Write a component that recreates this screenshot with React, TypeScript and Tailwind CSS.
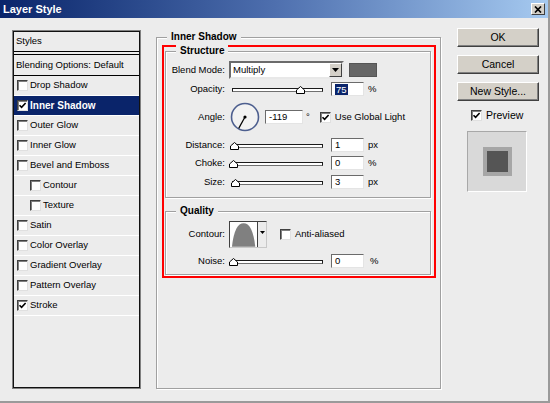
import React from 'react';

const styles = [
  { label: 'Drop Shadow' },
  { label: 'Inner Shadow', on: true, active: true },
  { label: 'Outer Glow' },
  { label: 'Inner Glow' },
  { label: 'Bevel and Emboss' },
  { label: 'Contour', sub: true },
  { label: 'Texture', sub: true },
  { label: 'Satin' },
  { label: 'Color Overlay' },
  { label: 'Gradient Overlay' },
  { label: 'Pattern Overlay' },
  { label: 'Stroke', on: true },
];

function Check({ on }: { on?: boolean }) {
  return (
    <span className="flex h-[11px] w-[11px] shrink-0 items-center justify-center border border-t-[#404040] border-l-[#404040] border-r-[#e0e0e0] border-b-[#e0e0e0] bg-white shadow-[inset_1px_1px_0_#808080]">
      {on && (
        <svg width="9" height="9" viewBox="0 0 9 9">
          <path d="M1.5 4.2L3.6 6.4L7.6 2" fill="none" stroke="#000" strokeWidth="1.6" />
        </svg>
      )}
    </span>
  );
}

function Slider({ at }: { at: number }) {
  return (
    <div className="relative h-[16px] w-[95px] shrink-0">
      <div className="ml-[3px] mt-[7px] h-[4px] w-[91px] border border-[#1a1a1a] border-b-[#707070] bg-white" />
      <svg className="absolute top-[5px]" style={{ left: at }} width="9" height="8" viewBox="0 0 9 8">
        <path d="M0.5 7.5V4L4.5 0.5L8.5 4V7.5Z" fill="#fff" stroke="#000" />
      </svg>
    </div>
  );
}

function Field({ children, w = 'w-[33px]' }: { children: React.ReactNode; w?: string }) {
  return (
    <span className={`flex h-[14px] ${w} shrink-0 items-center border border-t-[#6b6b6b] border-l-[#6b6b6b] border-r-[#e4e4e4] border-b-[#e4e4e4] bg-white pl-[3px] leading-none`}>
      {children}
    </span>
  );
}

function Row({ label, className = '', children }: { label: string; className?: string; children: React.ReactNode }) {
  return (
    <div className={`flex items-center ${className}`}>
      <span className="w-[59px] shrink-0 text-right">{label}</span>
      <div className="ml-[4px] flex items-center">{children}</div>
    </div>
  );
}

function Group({ title, className = '', children }: { title: string; className?: string; children?: React.ReactNode }) {
  return (
    <div className={`relative border border-[#a0a0a0] shadow-[inset_1px_1px_0_#fff,1px_1px_0_#fff] ${className}`}>
      <span className="absolute left-[10px] top-[-7px] bg-[#ececec] px-[4px] text-[10px] font-bold leading-[12px]">
        {title}
      </span>
      {children}
    </div>
  );
}

function Button({ children, className = '' }: { children: React.ReactNode; className?: string }) {
  return (
    <div className={`flex h-[19px] w-[82px] items-center justify-center border border-t-white border-l-white border-r-[#404040] border-b-[#404040] bg-[#d4d0c8] text-[10.5px] shadow-[inset_-1px_-1px_0_#808080] ${className}`}>
      {children}
    </div>
  );
}

export default function App() {
  return (
    <div className="h-[403px] w-[550px] overflow-hidden border-b-2 border-r-2 border-[#9a9a9a] bg-[#ececec] text-[9.5px] text-black [font-family:'Liberation_Sans',Arial,sans-serif]">
      {/* title bar */}
      <div className="flex h-[18px] items-center justify-between bg-linear-to-r from-[#0a246a] via-[#4e6fae] to-[#a6caf0] pl-[3px]">
        <span className="text-[11px] font-bold text-white">Layer Style</span>
        <span className="mr-[3px] flex h-[12px] w-[14px] items-center justify-center border border-t-white border-l-white border-r-[#404040] border-b-[#404040] bg-[#d4d0c8]">
          <svg width="8" height="7" viewBox="0 0 8 7">
            <path d="M1 0.5L7 6.5M7 0.5L1 6.5" stroke="#000" strokeWidth="1.7" />
          </svg>
        </span>
      </div>

      <div className="flex pl-[12px] pt-[10px]">
        {/* styles list */}
        <div className="mt-[2px] h-[359px] w-[129px] shrink-0 border border-[#808080]">
          <div className="h-full border border-[#111]">
            <div className="flex h-[20px] items-center border-b border-black pl-[2px]">Styles</div>
            <div className="mt-[2px] flex h-[22px] items-center border-y border-black pl-[2px]">
              Blending Options: Default
            </div>
            {styles.map((s) => (
              <div
                key={s.label}
                className={`flex h-[20px] items-center border-b border-white ${s.sub ? 'pl-[16px]' : 'pl-[3px]'} ${
                  s.active ? 'bg-[#0a246a] text-[10px] font-bold text-white' : ''
                }`}
              >
                <Check on={s.on} />
                <span className="ml-[2px]">{s.label}</span>
              </div>
            ))}
          </div>
        </div>

        {/* settings */}
        <Group title="Inner Shadow" className="ml-[15px] mt-[9px] h-[352px] w-[285px] shrink-0">
          <div className="ml-[5px] mt-[7px] h-[233px] w-[274px] border-2 border-[#ff0000]">
            <Group title="Structure" className="ml-[1px] mt-[4px] h-[147px] w-[266px]">
              <div className="flex flex-col pt-[9px]">
                <Row label="Blend Mode:" className="h-[18px]">
                  <div className="flex h-[18px] w-[115px] items-center justify-between border-2 border-t-[#6b6b6b] border-l-[#6b6b6b] border-r-[#e8e8e8] border-b-[#e8e8e8] bg-white pl-[2px]">
                    <span>Multiply</span>
                    <span className="flex h-[14px] w-[13px] items-center justify-center border border-t-white border-l-white border-r-[#404040] border-b-[#404040] bg-[#d4d0c8]">
                      <svg width="7" height="4" viewBox="0 0 7 4">
                        <path d="M0 0H7L3.5 4Z" fill="#000" />
                      </svg>
                    </span>
                  </div>
                  <span className="ml-[5px] h-[14px] w-[28px] border border-[#555] bg-[#666]" />
                </Row>
                <Row label="Opacity:" className="mt-[2px] h-[16px]">
                  <Slider at={67} />
                  <span className="ml-[7px]">
                    <Field>
                      <span className="bg-[#0a246a] px-[1px] leading-[11px] text-white">75</span>
                    </Field>
                  </span>
                  <span className="ml-[4px]">%</span>
                </Row>
                <Row label="Angle:" className="mt-[5px] h-[30px]">
                  <svg width="32" height="30" viewBox="0 0 32 30">
                    <circle cx="16" cy="15" r="13.5" fill="#f2f2f2" stroke="#4d5f8f" strokeWidth="1.6" />
                    <path d="M16 15L9.7 26.4" stroke="#000" strokeWidth="1.2" />
                    <circle cx="16" cy="15" r="1.6" fill="#000" />
                  </svg>
                  <span className="ml-[4px]">
                    <Field w="w-[38px]">-119</Field>
                  </span>
                  <span className="ml-[3px] self-start pt-[10px] leading-none">°</span>
                  <span className="ml-[10px]">
                    <Check on />
                  </span>
                  <span className="ml-[4px]">Use Global Light</span>
                </Row>
                <Row label="Distance:" className="mt-[5px] h-[16px]">
                  <Slider at={1} />
                  <span className="ml-[7px]">
                    <Field>1</Field>
                  </span>
                  <span className="ml-[4px]">px</span>
                </Row>
                <Row label="Choke:" className="mt-[2px] h-[16px]">
                  <Slider at={0} />
                  <span className="ml-[7px]">
                    <Field>0</Field>
                  </span>
                  <span className="ml-[4px]">%</span>
                </Row>
                <Row label="Size:" className="mt-[3px] h-[16px]">
                  <Slider at={2} />
                  <span className="ml-[7px]">
                    <Field>3</Field>
                  </span>
                  <span className="ml-[4px]">px</span>
                </Row>
              </div>
            </Group>

            <Group title="Quality" className="ml-[1px] mt-[13px] h-[64px] w-[266px]">
              <div className="flex flex-col pt-[9px]">
                <Row label="Contour:" className="h-[27px]">
                  <div className="flex h-[27px] w-[38px] border border-t-[#404040] border-l-[#404040] border-r-[#c8c8c8] border-b-[#c8c8c8]">
                    <svg width="28" height="25" viewBox="0 0 28 25" className="bg-white">
                      <path d="M2 25C4 8 8 1 14 1C20 1 24 8 26 25Z" fill="#808080" />
                    </svg>
                    <span className="flex w-[9px] justify-center border-l border-[#404040] bg-[#ececec] pt-[9px]">
                      <svg width="5" height="3" viewBox="0 0 5 3">
                        <path d="M0 0H5L2.5 3Z" fill="#000" />
                      </svg>
                    </span>
                  </div>
                  <span className="ml-[13px]">
                    <Check />
                  </span>
                  <span className="ml-[4px]">Anti-aliased</span>
                </Row>
                <Row label="Noise:" className="mt-[5px] h-[16px]">
                  <Slider at={0} />
                  <span className="ml-[7px]">
                    <Field>0</Field>
                  </span>
                  <span className="ml-[6px]">%</span>
                </Row>
              </div>
            </Group>
          </div>
        </Group>

        {/* buttons */}
        <div className="ml-[16px] flex flex-col">
          <Button>OK</Button>
          <Button className="mt-[8px]">Cancel</Button>
          <Button className="mt-[8px]">New Style...</Button>
          <div className="mt-[7px] flex items-center pl-[14px] text-[10.5px]">
            <Check on />
            <span className="ml-[4px]">Preview</span>
          </div>
          <div className="ml-[10px] mt-[7px] flex h-[61px] w-[60px] items-center justify-center border border-t-[#a8a8a8] border-l-[#a8a8a8] border-r-white border-b-white bg-[#d9d9d9]">
            <div className="flex h-[29px] w-[29px] items-center justify-center bg-[#a6a6a6]">
              <div className="h-[21px] w-[21px] bg-[#555]" />
            </div>
          </div>
        </div>
      </div>
    </div>
  );
}
